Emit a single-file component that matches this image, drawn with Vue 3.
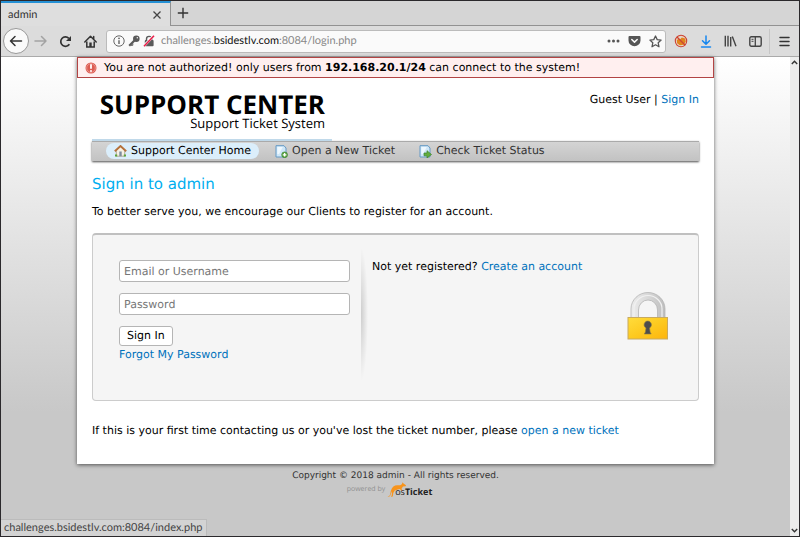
<script setup>
import { ref } from 'vue'

const email = ref('')
const password = ref('')
const address = { before: 'challenges.', host: 'bsidestlv.com', after: ':8084/login.php' }
const nav = [
  { label: 'Support Center Home', icon: 'home', active: true },
  { label: 'Open a New Ticket', icon: 'new', active: false },
  { label: 'Check Ticket Status', icon: 'status', active: false },
]
</script>

<template>
  <div class="browser">
    <div class="tabs">
      <div class="tab">
        <span>admin</span>
        <button class="icon-btn" type="button" aria-label="Close tab">
          <svg width="10" height="10" viewBox="0 0 10 10"><path d="M1.5 1.5l7 7M8.5 1.5l-7 7" stroke="#444" stroke-width="1.3" /></svg>
        </button>
      </div>
      <button class="icon-btn new-tab" type="button" aria-label="New tab">
        <svg width="12" height="12" viewBox="0 0 12 12"><path d="M6 .8v10.4M.8 6h10.4" stroke="#333" stroke-width="1.4" /></svg>
      </button>
    </div>

    <div class="toolbar">
      <button class="icon-btn back" type="button" aria-label="Back">
        <svg width="14" height="14" viewBox="0 0 14 14" fill="none" stroke="#333" stroke-width="1.5" stroke-linecap="round" stroke-linejoin="round"><path d="M12.5 7h-11M6 2.5L1.5 7 6 11.500" /></svg>
      </button>
      <button class="icon-btn" type="button" aria-label="Forward">
        <svg width="13" height="14" viewBox="0 0 13 14" fill="none" stroke="#a3a3a3" stroke-width="1.5" stroke-linecap="round" stroke-linejoin="round"><path d="M1 7h11M7.500 2.500L12 7l-4.500 4.500" /></svg>
      </button>
      <button class="icon-btn" type="button" aria-label="Reload">
        <svg width="13" height="13" viewBox="0 0 13 13"><path d="M10.400 9.200A4.700 4.700 0 1 1 9.800 3.300" fill="none" stroke="#333" stroke-width="1.700" /><path d="M12 1v5H7z" fill="#333" /></svg>
      </button>
      <button class="icon-btn" type="button" aria-label="Home">
        <svg width="13" height="13" viewBox="0 0 13 13"><path d="M.8 7L6.500 1.300 12.200 7M9.700 1.500v2.500" fill="none" stroke="#333" stroke-width="1.500" stroke-linecap="round" stroke-linejoin="round" /><path d="M2.800 6.500V12h7.400V6.500" fill="none" stroke="#333" stroke-width="1.500" /><path d="M5.300 7.500h2.400V12H5.300z" fill="#333" /></svg>
      </button>
      <div class="address">
        <svg width="12" height="12" viewBox="0 0 12 12"><circle cx="6" cy="6" r="5.200" fill="none" stroke="#666" /><path d="M6 5.300v3.700" stroke="#555" stroke-width="1.300" /><circle cx="6" cy="3.400" r=".8" fill="#555" /></svg>
        <svg width="12" height="12" viewBox="0 0 12 12"><circle cx="8.300" cy="3.700" r="3.300" fill="#5a5a5a" /><circle cx="9.300" cy="2.700" r=".7" fill="#fafafa" /><path d="M7 5L1.200 10.800" fill="none" stroke="#5a5a5a" stroke-width="2.200" /><path d="M3 10.300h1.800V8.500" fill="none" stroke="#5a5a5a" /></svg>
        <svg width="12" height="12" viewBox="0 0 12 12"><path d="M3.500 6V4a2.600 2.600 0 0 1 5.200 0v2" fill="none" stroke="#5a5a5a" stroke-width="1.400" /><rect x="1.800" y="5" width="8.800" height="6.200" rx="1" fill="#5a5a5a" /><path d="M.8 11L10.500 .8" stroke="#fafafa" stroke-width="2.600" /><path d="M1 11.300L11 .8" stroke="#e8204a" stroke-width="1.600" /></svg>
        <span class="url">{{ address.before }}<span class="host">{{ address.host }}</span>{{ address.after }}</span>
        <button class="icon-btn" type="button" aria-label="Page actions">
          <svg width="13" height="12" viewBox="0 0 13 12" fill="#555"><circle cx="2" cy="6" r="1.500" /><circle cx="6.500" cy="6" r="1.500" /><circle cx="11" cy="6" r="1.500" /></svg>
        </button>
        <button class="icon-btn" type="button" aria-label="Save to Pocket">
          <svg width="13" height="12" viewBox="0 0 13 12"><path d="M1.500 1h10q1 0 1 1v3.500a6 5.800 0 0 1-12 0V2q0-1 1-1z" fill="#555" /><path d="M3.800 4.500l2.700 2.600 2.700-2.600" fill="none" stroke="#fafafa" stroke-width="1.500" stroke-linecap="round" stroke-linejoin="round" /></svg>
        </button>
        <button class="icon-btn" type="button" aria-label="Bookmark">
          <svg width="13" height="13" viewBox="0 0 13 13"><path d="M6.500 1l1.700 3.600 3.900.5-2.900 2.700.8 4-3.500-2-3.500 2 .8-4L.9 5.100l3.900-.5z" fill="none" stroke="#555" stroke-width="1.300" stroke-linejoin="round" /></svg>
        </button>
      </div>
      <button class="icon-btn" type="button" aria-label="Cookie blocker">
        <svg width="14" height="14" viewBox="0 0 14 14"><circle cx="7" cy="7" r="5.800" fill="#e8d4c4" /><path d="M2.800 6l2-1.200 1.500.5 1.500-1.800 3.200 1 .8 3-2 3.200-4 .6-2.700-2z" fill="#e0851c" /><circle cx="7" cy="7" r="5.700" fill="none" stroke="#cd4433" stroke-width="1.100" /><path d="M3 3l8 8" stroke="#cd4433" stroke-width="1.300" /></svg>
      </button>
      <button class="icon-btn" type="button" aria-label="Downloads">
        <svg width="12" height="13" viewBox="0 0 12 13" fill="none" stroke="#1687ef" stroke-width="1.500" stroke-linecap="round" stroke-linejoin="round"><path d="M6 1v8M2.500 5.800L6 9.300l3.500-3.500M1.500 12h9" /></svg>
      </button>
      <button class="icon-btn" type="button" aria-label="Library">
        <svg width="13" height="12" viewBox="0 0 13 12" stroke="#444" stroke-width="1.400"><path d="M1.300.8v10.600M4 .8v10.600M6.700 2v9.400M8.300 1.500l3.700 9.800" /></svg>
      </button>
      <button class="icon-btn" type="button" aria-label="Sidebars">
        <svg width="13" height="11" viewBox="0 0 13 11" fill="none" stroke="#444"><rect x=".8" y=".8" width="11.400" height="9.400" rx="1.500" stroke-width="1.400" /><path d="M6.300 1v9" stroke-width="1.300" /><path d="M2.500 3.300h2M2.500 5.300h2" /></svg>
      </button>
      <span class="divider"></span>
      <button class="icon-btn" type="button" aria-label="Menu">
        <svg width="11" height="11" viewBox="0 0 11 11" stroke="#333" stroke-width="1.500" stroke-linecap="round"><path d="M1 1.500h9M1 5.500h9M1 9.500h9" /></svg>
      </button>
    </div>

    <div class="viewport">
      <div class="page">
        <main class="container">
          <div class="error" role="alert">
            <svg width="12" height="12" viewBox="0 0 12 12"><circle cx="6" cy="6" r="5.500" fill="#dc5a50" /><circle cx="6" cy="6" r="4.300" fill="none" stroke="#ee9c94" stroke-width=".8" /><path d="M6 2.300v4.500" stroke="#fff" stroke-width="1.800" /><circle cx="6" cy="8.900" r="1" fill="#fff" /></svg>
            <span>You are not authorized! only users from <b>192.168.20.1/24</b> can connect to the system!</span>
          </div>
          <header class="header">
            <a class="logo" href="#">
              <span class="logo-name">SUPPORT CENTER</span>
              <span class="logo-sub">Support Ticket System</span>
            </a>
            <p class="user">Guest User | <a href="#">Sign In</a></p>
          </header>
          <nav class="nav">
            <a v-for="item in nav" :key="item.label" href="#" :class="{ active: item.active }">
              <svg v-if="item.icon === 'home'" width="13" height="12" viewBox="0 0 13 12"><path d="M2.300 5.500v5.700h8.400V5.500L6.500 1.500z" fill="#f6f1e5" stroke="#9a8c70" stroke-width=".7" /><path d="M.8 6.300L6.500 1l5.700 5.300" fill="none" stroke="#b5713c" stroke-width="1.900" /><path d="M5.300 6.500h2.400v4.700H5.300z" fill="#7d8c9c" /><path d="M1 9.500h2.200v2H1zM9.800 9.500H12v2H9.800z" fill="#59a43a" /></svg>
              <svg v-else width="13" height="13" viewBox="0 0 13 13">
                <path d="M1 .7h8L11 3v9H1z" fill="#cfe7f8" stroke="#6499c4" />
                <path d="M2.300 2h5.500L4 9H2.300z" fill="#eef8ff" />
                <template v-if="item.icon === 'new'"><circle cx="9.600" cy="9.800" r="2.900" fill="#5ba53f" stroke="#36802b" stroke-width=".6" /><path d="M9.600 8v3.600M7.800 9.800h3.600" stroke="#fff" stroke-width="1.300" /></template>
                <path v-else d="M5 8h3V5.700l4.500 3.800L8 13v-2.200H5z" fill="#62ad3d" stroke="#3d842b" stroke-width=".7" />
              </svg>
              {{ item.label }}
            </a>
          </nav>
          <section class="content">
            <h1>Sign in to admin</h1>
            <p class="intro">To better serve you, we encourage our Clients to register for an account.</p>
            <div class="panel">
              <form class="login" @submit.prevent>
                <input v-model="email" type="text" placeholder="Email or Username" aria-label="Email or Username">
                <input v-model="password" type="password" placeholder="Password" aria-label="Password">
                <button class="submit" type="submit">Sign In</button>
                <a href="#">Forgot My Password</a>
              </form>
              <div class="shade"></div>
              <div class="register">
                <p>Not yet registered? <a href="#">Create an account</a></p>
                <svg class="lock" width="42" height="48" viewBox="0 0 42 48">
                  <defs>
                    <linearGradient id="gold" x1="0" y1="0" x2="1" y2="1"><stop offset="0" stop-color="#ffdc3c" /><stop offset=".5" stop-color="#fdca20" /><stop offset="1" stop-color="#fdb40c" /></linearGradient>
                    <linearGradient id="steel" x1="0" y1="0" x2="1" y2="0"><stop offset="0" stop-color="#ececec" /><stop offset=".5" stop-color="#d8d8d8" /><stop offset="1" stop-color="#bdbdbd" /></linearGradient>
                  </defs>
                  <path d="M4 26V17a17 16.500 0 0 1 34 0v9h-7.500V18a9.500 10 0 0 0-19 0v8z" fill="url(#steel)" stroke="#b4b4b4" stroke-width=".8" />
                  <path d="M7 25V17a14 13.500 0 0 1 28 0v8" fill="none" stroke="#f0f0f0" stroke-width="1.200" />
                  <rect x="1" y="25.500" width="39.500" height="21.500" fill="url(#gold)" stroke="#c8aa60" />
                  <path d="M17.300 42l1-1.800 .7-4.200a3.700 3.700 0 1 1 3.500 0l.7 4.200 1 1.800z" fill="#4d4d4d" stroke="#8f7d41" stroke-width=".6" />
                </svg>
              </div>
            </div>
            <p class="first">If this is your first time contacting us or you've lost the ticket number, please <a href="#">open a new ticket</a></p>
          </section>
        </main>
        <footer class="footer">
          <p>Copyright © 2018 admin - All rights reserved.</p>
          <a class="powered" href="#">
            <span>powered by</span>
            <span class="brand">
              <svg width="20" height="16" viewBox="0 0 20 16"><path d="M.5 14.500c3 .2 2.500-3 3.500-6C5 4.500 8 2.800 11 3.200c2 .3 3-.2 4-1.200L15.500.3l1 1.300 2.500 1.700-.3.900-2.700.3-1.500 2.200 1 2-.7.300-2-2-2 .5-3 1-1.500 2.500-.5 3.500-2 .2 1-1.500.2-4L3.800 12c-.6 2.500-1.500 3.300-3.300 2.500z" fill="#f7941d" /></svg>
              <span class="os">os</span><b>Ticket</b>
            </span>
          </a>
        </footer>
        <div class="status">challenges.bsidestlv.com:8084/index.php</div>
      </div>
      <div class="scrollbar">
        <svg width="7" height="5" viewBox="0 0 7 5"><path d="M.8 4L3.500 1.300 6.200 4" fill="none" stroke="#333" stroke-width="1.400" /></svg>
        <svg width="7" height="5" viewBox="0 0 7 5"><path d="M.8 1l2.700 2.700L6.200 1" fill="none" stroke="#333" stroke-width="1.400" /></svg>
      </div>
    </div>
  </div>
</template>

<style>
body { margin: 0; }
</style>

<style scoped>
* { box-sizing: border-box; }
p, h1 { margin: 0; font-weight: normal; }
svg { display: block; flex: none; }
a { color: #0072bc; text-decoration: none; }
button, input { font: inherit; text-rendering: inherit; }

.browser {
  display: flex;
  flex-direction: column;
  min-height: 100vh;
  border: 1px solid #2b292c;
  background: #dcdcdc;
  font: 11px/16px "DejaVu Sans", sans-serif;
  text-rendering: geometricPrecision;
  color: #000;
}
.icon-btn {
  display: flex;
  align-items: center;
  justify-content: center;
  padding: 0;
  border: 0;
  background: none;
}

.tabs {
  display: flex;
  height: 25px;
  background: #d5d5d5;
  border-bottom: 1px solid #929292;
  font-family: "Lato", sans-serif;
  color: #333;
}
.tab {
  display: flex;
  align-items: center;
  justify-content: space-between;
  width: 170px;
  height: 25px;
  padding: 0 8px 0 7px;
  border-top: 2px solid #2590d4;
  border-right: 1px solid #929292;
  background: #dedede;
}
.new-tab { width: 24px; }

.toolbar {
  display: flex;
  align-items: center;
  gap: 12px;
  height: 31px;
  padding: 0 9px 0 2px;
  border-bottom: 1px solid #aaa;
}
.back {
  width: 26px;
  height: 26px;
  margin-right: -7px;
  border: 1px solid #999;
  border-radius: 50%;
  background: #fafafa;
}
.address {
  display: flex;
  flex: 1;
  align-items: center;
  gap: 3px;
  height: 23px;
  margin: 0 -4px 0 -3px;
  padding: 0 3px 0 6px;
  border: 1px solid #bbb;
  border-radius: 3px;
  background: #fafafa;
  font-family: "Lato", sans-serif;
  color: #888;
}
.url { flex: 1; margin-left: 3px; }
.host { color: #111; }
.address .icon-btn { margin-left: 5px; }
.divider { width: 1px; height: 25px; margin: 0 -3px 0 -5px; background: #c6c6c6; }

.viewport { display: flex; flex: 1; }
.page {
  position: relative;
  flex: 1;
  background: #c8c8c8 linear-gradient(#fff, #c8c8c8) 0 0 / 100% 355px no-repeat;
}
.scrollbar {
  display: flex;
  flex-direction: column;
  align-items: center;
  justify-content: space-between;
  width: 9px;
  padding: 3px 0;
  background: #ececec;
}
.container {
  max-width: 637px;
  margin: 0 auto;
  padding-bottom: 25px;
  background: #fff;
  box-shadow: 0 1px 4px rgba(0, 0, 0, 0.6);
}
.error {
  display: flex;
  align-items: center;
  gap: 7px;
  height: 21px;
  padding-left: 7px;
  border: 1px solid #b24444;
  background: #ffefef;
}
.header {
  display: flex;
  justify-content: space-between;
  align-items: flex-start;
  padding: 0 15px;
}
.logo {
  display: flex;
  flex-direction: column;
  align-items: flex-end;
  width: 240px;
  height: 63px;
  padding: 14px 7px 0 0;
  border-bottom: 2px solid #c0d9ea;
  color: #000;
  font-family: "Open Sans", sans-serif;
}
.logo-name { font-size: 26px; line-height: 24px; font-weight: 700; white-space: nowrap; }
.logo-sub { font-size: 13px; line-height: 14px; }
.user { padding-top: 14px; }
.nav {
  display: flex;
  gap: 8px;
  height: 20px;
  margin: 0 15px;
  padding: 1px 14px;
  border-top: 1px solid #aaa;
  background: linear-gradient(#d4d4d4, #c2c2c2);
  box-shadow: 0 1px 2px rgba(0, 0, 0, 0.7);
}
.nav a {
  display: flex;
  align-items: center;
  gap: 4px;
  height: 16px;
  padding: 0 8px;
  border-radius: 8px;
  color: #333;
}
.nav .active { background: #dbeefb; color: #000; }
.content { padding: 14px 15px 0; }
h1 { font-size: 15px; line-height: 18px; color: #00aeef; }
.intro { margin: 11px 0 13px; }
.panel {
  display: flex;
  height: 168px;
  border: 1px solid #ccc;
  border-top: 2px solid #c0c0c0;
  border-radius: 4px;
  background: #f5f5f5;
  padding: 12px 28px 12px 26px;
}
.login {
  display: flex;
  flex-direction: column;
  align-items: flex-start;
  width: 231px;
  padding-top: 13px;
}
.login input {
  width: 100%;
  height: 22px;
  margin: 0 0 11px;
  padding: 0 4px;
  border: 1px solid #b5b5b5;
  border-radius: 3px;
  background: #fff;
}
.login input::placeholder { color: #777; opacity: 1; }
.submit {
  height: 20px;
  margin-bottom: 1px;
  padding: 0 7px;
  border: 1px solid #b5b5b5;
  border-radius: 3px;
  background: #fff;
  color: #000;
}
.shade {
  width: 11px;
  height: 134px;
  margin-left: 11px;
  background: radial-gradient(ellipse 7px 67px at left center, rgba(0, 0, 0, 0.16), transparent);
}
.register { flex: 1; padding-top: 12px; }
.lock { margin: 17px 1px 0 auto; }
.first { margin-top: 22px; }
.footer {
  display: flex;
  flex-direction: column;
  align-items: center;
  padding-top: 4px;
  color: #333;
  font-size: 9px;
}
.powered {
  display: flex;
  align-items: center;
  gap: 2px;
  height: 16px;
  margin-top: -2px;
  padding-right: 12px;
  color: #909090;
  font: 7px/16px "Open Sans", sans-serif;
}
.brand { display: flex; align-items: center; color: #222; font-size: 9px; }
.os { margin-left: -12px; padding-top: 4px; }
.brand b { padding-top: 4px; }
.status {
  position: absolute;
  left: 0;
  bottom: 0;
  height: 17px;
  padding: 0 4px 0 3px;
  border: 1px solid #bbb;
  border-width: 1px 1px 0 0;
  background: #d3d3d3;
  color: #444;
  font-family: "Lato", sans-serif;
}
</style>
